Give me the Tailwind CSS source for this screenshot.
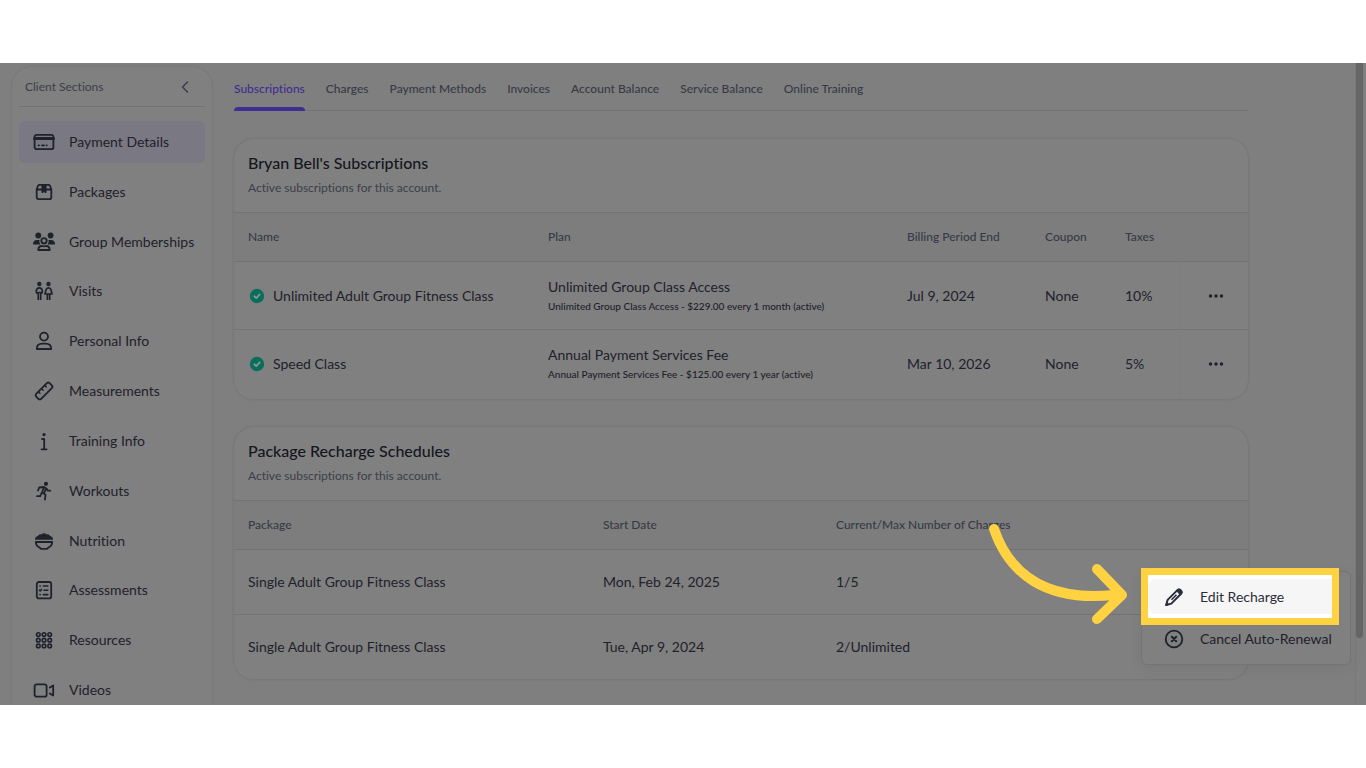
<!DOCTYPE html>
<html lang="en">
<head>
    <meta charset="UTF-8">
    <meta name="viewport" content="width=device-width, initial-scale=1.0">
    <title>Client Payment Details - Subscriptions</title>
    <script src="https://cdn.jsdelivr.net/npm/@tailwindcss/browser@4"></script>
</head>
<body class="bg-white py-[63px] font-[Lato,sans-serif] text-[#1f212b] [font-variant-ligatures:none]">
    <div class="relative flex h-[calc(100vh-126px)] overflow-hidden bg-[#7f7f7f]">

        <!-- Sidebar -->
        <aside class="ml-3 mt-1 h-[700px] w-[200px] shrink-0 rounded-[20px] bg-[#808080] px-[7px] shadow-[0_0_3px_rgba(0,0,0,0.12)]">
            <div class="flex h-10 items-center justify-between border-b border-[#727272] pl-[6px] pr-3 text-xs text-[#3b3e49]">
                <h2>Client Sections</h2>
                <button type="button" aria-label="Collapse">
                    <svg class="size-4" viewBox="0 0 16 16" fill="none" stroke="currentColor" stroke-width="1.5" stroke-linecap="round" stroke-linejoin="round"><path d="M10.5 3 5.500 8l5 5"/></svg>
                </button>
            </div>
            <nav class="mt-[14px] flex h-[590px] flex-col justify-between text-sm">
                <a href="#" class="flex h-[42px] items-center gap-[13px] rounded-md bg-[#7a7882] pl-[13px]">
                    <svg class="size-6" viewBox="0 0 24 24" fill="none" stroke="currentColor" stroke-width="1.8" stroke-linecap="round"><rect x="2.600" y="4.800" width="18.800" height="14.400" rx="2"/><path d="M2.600 8.500h18.800" stroke-width="3"/><path d="M6.500 15.300h.5M10 15.300h2M14.500 15.300h.3"/></svg>
                    Payment Details
                </a>
                <a href="#" class="flex h-[42px] items-center gap-[13px] pl-[13px]">
                    <svg class="size-6" viewBox="0 0 24 24" fill="none" stroke="currentColor" stroke-width="1.8" stroke-linejoin="round"><path d="M7.500 4.800h9q1 0 1.500 1l1.300 3.400v8q0 2-2 2H6.700q-2 0-2-2v-8L6 5.800q.5-1 1.500-1zM4.700 9.500h14.600"/><path d="M10 4.800h4v8l-2-1.200-2 1.200z" fill="currentColor" stroke-width="1"/></svg>
                    Packages
                </a>
                <a href="#" class="flex h-[42px] items-center gap-[13px] pl-[13px]">
                    <svg class="size-6" viewBox="0 0 24 24" fill="none" stroke="currentColor" stroke-width="1.8" stroke-linejoin="round"><g fill="currentColor" stroke="none"><circle cx="6.300" cy="5.500" r="2.900"/><circle cx="18.600" cy="5.500" r="2.900"/><path d="M1 14.500q0-4.500 4-4.500h2.500q-.7 2.300.8 4.500zM23 14.500q0-4.500-4-4.500h-2.500q.7 2.300-.8 4.500z"/></g><circle cx="12" cy="10.800" r="2.700"/><path d="M6.300 20q0-4 3.700-4 2 .7 4 0 3.700 0 3.700 4z"/></svg>
                    Group Memberships
                </a>
                <a href="#" class="flex h-[42px] items-center gap-[13px] pl-[13px]">
                    <svg class="size-6" viewBox="0 0 24 24" fill="none" stroke="currentColor" stroke-width="1.7" stroke-linejoin="round"><g fill="currentColor" stroke="none"><circle cx="7.300" cy="5" r="2.200"/><circle cx="16.500" cy="5" r="2.200"/></g><path d="M5 15v-1q-1-.5-.7-2 .3-3.200 3-3.200t3 3.200q.3 1.500-.7 2v1M6.300 13v8M8.700 13v8M6 13.500h2.700"/><path d="M16.500 8.800q2 0 2.500 2l1 4.200h-7l1-4.200q.5-2 2.500-2zM15.400 15v6M17.700 15v6"/></svg>
                    Visits
                </a>
                <a href="#" class="flex h-[42px] items-center gap-[13px] pl-[13px]">
                    <svg class="size-6" viewBox="0 0 24 24" fill="none" stroke="currentColor" stroke-width="1.8" stroke-linejoin="round"><circle cx="12" cy="7.600" r="4"/><path d="M4.800 20q0-5.300 5.500-5.300h3.400q5.500 0 5.500 5.300z"/></svg>
                    Personal Info
                </a>
                <a href="#" class="flex h-[42px] items-center gap-[13px] pl-[13px]">
                    <svg class="size-6" viewBox="0 0 24 24" fill="none" stroke="currentColor" stroke-width="1.800" stroke-linecap="round"><g transform="rotate(-45 12 12)"><rect x="2.500" y="8.500" width="19" height="7" rx="2"/><path d="M7.500 8.800v2M12 8.800v2M16.500 8.800v2" stroke-width="1.400"/></g></svg>
                    Measurements
                </a>
                <a href="#" class="flex h-[42px] items-center gap-[13px] pl-[13px]">
                    <svg class="size-6" viewBox="0 0 24 24" fill="none" stroke="currentColor" stroke-width="1.800" stroke-linecap="round" stroke-linejoin="round"><circle cx="12" cy="5.600" r="1.600" fill="currentColor" stroke="none"/><path d="M10 10h2.200v10M9.600 20.300h5"/></svg>
                    Training Info
                </a>
                <a href="#" class="flex h-[42px] items-center gap-[13px] pl-[13px]">
                    <svg class="size-6" viewBox="0 0 24 24" fill="none" stroke="currentColor" stroke-width="1.800" stroke-linecap="round" stroke-linejoin="round"><circle cx="14" cy="4.800" r="2.100" fill="currentColor" stroke="none"/><path d="M6 11.500 7.200 8.500 12 8l-2 5.500 3.500 2.200-.5 4.800M9.600 14l-1.400 3.200H5M12.300 8.300l2.200 1.200 1.200 2.200h2.600M13.700 10l-1.500 4"/></svg>
                    Workouts
                </a>
                <a href="#" class="flex h-[42px] items-center gap-[13px] pl-[13px]">
                    <svg class="size-6" viewBox="0 0 24 24" fill="none" stroke="currentColor" stroke-width="1.800" stroke-linejoin="round"><path d="M3 10.800q-.2-3.300 3-3.800.8-2.200 3.200-1.600Q12 3 14.800 5.400 17.200 4.800 18 7q3.200.5 3 3.800z" fill="currentColor" stroke="none"/><path d="M3.800 13h16.400q0 4-4 5.600l-.8 1.200H8.600l-.8-1.200q-4-1.600-4-5.600z"/></svg>
                    Nutrition
                </a>
                <a href="#" class="flex h-[42px] items-center gap-[13px] pl-[13px]">
                    <svg class="size-6" viewBox="0 0 24 24" fill="none" stroke="currentColor" stroke-width="1.800" stroke-linecap="round" stroke-linejoin="round"><rect x="4.800" y="4" width="14.400" height="16.400" rx="2"/><path d="M7.900 8h.4M11.300 8h4.500M7.500 12.200l.7.700 1.300-1.500M12 12.300h3.800M7.900 16.600h.4M11.300 16.600h4.500" stroke-width="1.600"/></svg>
                    Assessments
                </a>
                <a href="#" class="flex h-[42px] items-center gap-[13px] pl-[13px]">
                    <svg class="size-6" viewBox="0 0 24 24" fill="none" stroke="currentColor" stroke-width="1.600"><circle cx="6.300" cy="6.500" r="1.800"/><circle cx="12" cy="6.500" r="1.800"/><circle cx="17.700" cy="6.500" r="1.800"/><circle cx="6.300" cy="12.200" r="1.800"/><circle cx="12" cy="12.200" r="1.800"/><circle cx="17.700" cy="12.200" r="1.800"/><circle cx="6.300" cy="17.900" r="1.800"/><circle cx="12" cy="17.900" r="1.800"/><circle cx="17.700" cy="17.900" r="1.800"/></svg>
                    Resources
                </a>
                <a href="#" class="flex h-[42px] items-center gap-[13px] pl-[13px]">
                    <svg class="size-6" viewBox="0 0 24 24" fill="none" stroke="currentColor" stroke-width="1.800" stroke-linecap="round" stroke-linejoin="round"><rect x="2.600" y="6.300" width="12" height="12.400" rx="2"/><path d="M17.800 9.500 21.200 7.500v10l-3.400-2"/></svg>
                    Videos
                </a>
            </nav>
        </aside>

        <!-- Main content -->
        <main class="min-w-0 flex-1 pl-[22px] pr-[107px]">
            <nav class="flex h-12 gap-[21px] border-b border-[#747474] text-xs font-medium text-[#373a46]">
                <a href="#" class="relative flex items-center pt-1 text-[#3f2e91] after:absolute after:inset-x-0 after:-bottom-px after:h-1 after:rounded-t after:bg-[#3f2e91]">Subscriptions</a>
                <a href="#" class="flex items-center pt-1">Charges</a>
                <a href="#" class="flex items-center pt-1">Payment Methods</a>
                <a href="#" class="flex items-center pt-1">Invoices</a>
                <a href="#" class="flex items-center pt-1">Account Balance</a>
                <a href="#" class="flex items-center pt-1">Service Balance</a>
                <a href="#" class="flex items-center pt-1">Online Training</a>
            </nav>

            <section class="mt-7 overflow-hidden rounded-[20px] bg-[#808080] shadow-[0_0_3px_rgba(0,0,0,0.15)]">
                <div class="h-[73px] px-[14px] pt-[14px]">
                    <h2 class="text-base leading-5 font-medium text-[#14161f]">Bryan Bell's Subscriptions</h2>
                    <p class="mt-[7px] text-xs text-[#3b3e49]">Active subscriptions for this account.</p>
                </div>
                <table class="w-full table-fixed text-left text-sm">
                    <thead class="border-y border-[#737373] bg-[#7d7d7d] text-xs text-[#373a46]">
                        <tr class="h-[49px]">
                            <th class="w-[300px] pl-[14px] font-medium">Name</th>
                            <th class="pl-[14px] font-medium">Plan</th>
                            <th class="w-[138px] pl-[14px] font-medium">Billing Period End</th>
                            <th class="w-20 pl-[14px] font-medium">Coupon</th>
                            <th class="w-[68px] pl-[14px] font-medium">Taxes</th>
                            <th class="w-[69px]"></th>
                        </tr>
                    </thead>
                    <tbody>
                        <tr class="h-[68px] border-b border-[#737373]">
                            <td class="pl-[14px]">
                                <div class="flex items-center gap-2 pl-px">
                                    <svg class="size-4" viewBox="0 0 16 16"><circle cx="8" cy="8" r="7.200" fill="#0c6e5a"/><path d="M5.200 8.200 7.200 10.100l3.500-3.700" fill="none" stroke="#8a9a96" stroke-width="1.600" stroke-linecap="round" stroke-linejoin="round"/></svg>
                                    Unlimited Adult Group Fitness Class
                                </div>
                            </td>
                            <td class="pl-[14px]">
                                <p class="leading-5">Unlimited Group Class Access</p>
                                <p class="text-[10px] leading-[18px] font-medium">Unlimited Group Class Access - $229.00 every 1 month (active)</p>
                            </td>
                            <td class="pl-[14px]">Jul 9, 2024</td>
                            <td class="pl-[14px]">None</td>
                            <td class="pl-[14px]">10%</td>
                            <td class="border-l border-[#7d7d7d] pl-7">
                                <button type="button" aria-label="More" class="block">
                                    <svg class="size-4" viewBox="0 0 16 16" fill="currentColor"><circle cx="2.500" cy="8" r="1.700"/><circle cx="8" cy="8" r="1.700"/><circle cx="13.500" cy="8" r="1.700"/></svg>
                                </button>
                            </td>
                        </tr>
                        <tr class="h-[69px]">
                            <td class="pl-[14px]">
                                <div class="flex items-center gap-2 pl-px">
                                    <svg class="size-4" viewBox="0 0 16 16"><circle cx="8" cy="8" r="7.200" fill="#0c6e5a"/><path d="M5.200 8.200 7.200 10.100l3.500-3.700" fill="none" stroke="#8a9a96" stroke-width="1.600" stroke-linecap="round" stroke-linejoin="round"/></svg>
                                    Speed Class
                                </div>
                            </td>
                            <td class="pl-[14px]">
                                <p class="leading-5">Annual Payment Services Fee</p>
                                <p class="text-[10px] leading-[18px] font-medium">Annual Payment Services Fee - $125.00 every 1 year (active)</p>
                            </td>
                            <td class="pl-[14px]">Mar 10, 2026</td>
                            <td class="pl-[14px]">None</td>
                            <td class="pl-[14px]">5%</td>
                            <td class="border-l border-[#7d7d7d] pl-7">
                                <button type="button" aria-label="More" class="block">
                                    <svg class="size-4" viewBox="0 0 16 16" fill="currentColor"><circle cx="2.500" cy="8" r="1.700"/><circle cx="8" cy="8" r="1.700"/><circle cx="13.500" cy="8" r="1.700"/></svg>
                                </button>
                            </td>
                        </tr>
                    </tbody>
                </table>
            </section>

            <section class="mt-7 overflow-hidden rounded-[20px] bg-[#808080] shadow-[0_0_3px_rgba(0,0,0,0.15)]">
                <div class="h-[73px] px-[14px] pt-[14px]">
                    <h2 class="text-base leading-5 font-medium text-[#14161f]">Package Recharge Schedules</h2>
                    <p class="mt-[7px] text-xs text-[#3b3e49]">Active subscriptions for this account.</p>
                </div>
                <table class="w-full table-fixed text-left text-sm">
                    <thead class="border-y border-[#737373] bg-[#7d7d7d] text-xs text-[#373a46]">
                        <tr class="h-[49px]">
                            <th class="w-[355px] pl-[14px] font-medium">Package</th>
                            <th class="w-[233px] pl-[14px] font-medium">Start Date</th>
                            <th class="pl-[14px] font-medium">Current/Max Number of Charges</th>
                        </tr>
                    </thead>
                    <tbody>
                        <tr class="h-[65px] border-b border-[#737373]">
                            <td class="pl-[14px]">Single Adult Group Fitness Class</td>
                            <td class="pl-[14px]">Mon, Feb 24, 2025</td>
                            <td class="pl-[14px]">1/5</td>
                        </tr>
                        <tr class="h-[65px]">
                            <td class="pl-[14px]">Single Adult Group Fitness Class</td>
                            <td class="pl-[14px]">Tue, Apr 9, 2024</td>
                            <td class="pl-[14px]">2/Unlimited</td>
                        </tr>
                    </tbody>
                </table>
            </section>
        </main>

        <!-- Scrollbar -->
        <div class="w-[11px] shrink-0 border-l border-[#7a7a7a]">
            <div class="h-[575px] w-[7px] rounded-b bg-[#666666]"></div>
        </div>

        <!-- Row menu -->
        <div class="absolute right-[15px] top-[508px] h-[94px] w-[210px] rounded-md border border-[#747474] bg-[#808080] text-sm shadow-[0_4px_16px_rgba(0,0,0,0.06)]">
            <button type="button" class="absolute -left-px -top-1 flex h-[57px] w-[198px] border-[7px] border-[#ffd242] bg-white text-[#2b2e3b]">
                <span class="my-1 ml-px flex flex-1 items-center gap-[14px] rounded-l-md bg-[#f6f6f6] pl-[13px]">
                    <svg class="size-6" viewBox="0 0 24 24" fill="none" stroke="currentColor" stroke-width="2" stroke-linejoin="round"><path d="m4.200 20 1.400-5.100L15.400 5.100q1.300-1.200 2.600 0l1.100 1.100q1.200 1.300 0 2.600L9.300 18.600z"/><path d="M14.200 5.900 16 4q1.500-1 3 .3l1.200 1.200Q21.300 7 20 8.400l-1.800 1.800zM3.200 21l1.300-4.500 3.200 3.200z" fill="currentColor" stroke="none"/><path d="m9.500 14.700 5-5" stroke-width="1.600"/></svg>
                    Edit Recharge
                </span>
            </button>
            <button type="button" class="absolute left-[20px] top-[55px] flex h-6 items-center gap-[14px]">
                <svg class="size-6" viewBox="0 0 24 24" fill="none" stroke="currentColor" stroke-width="1.800" stroke-linecap="round"><circle cx="12" cy="12" r="8.300"/><path d="m9.800 9.800 4.400 4.400M14.200 9.800l-4.400 4.400" stroke-width="2"/></svg>
                Cancel Auto-Renewal
            </button>
        </div>

        <!-- Pointer arrow -->
        <svg class="absolute right-[236px] top-[457px] h-[110px] w-[145px]" viewBox="0 0 145 110" fill="none" stroke="#ffd242" stroke-width="10" stroke-linecap="round" stroke-linejoin="round"><path d="M9 9C24 53 60 82 129 75"/><path d="M112 49l25 26-25 24"/></svg>
    </div>
</body>
</html>
